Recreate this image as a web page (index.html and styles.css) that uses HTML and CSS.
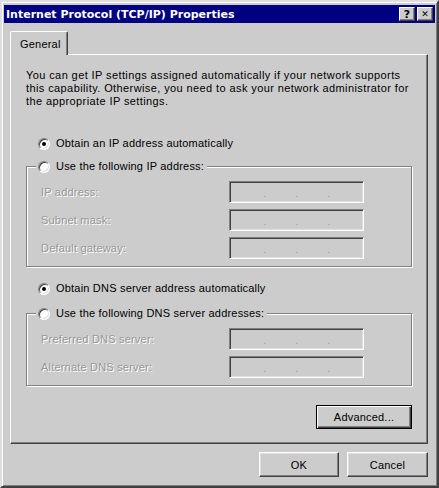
FILE: index.html
```html
<!DOCTYPE html>
<html lang="en">
<head>
    <meta charset="UTF-8">
    <meta name="viewport" content="width=device-width, initial-scale=1.0">
    <title>Internet Protocol (TCP/IP) Properties</title>
    <link rel="stylesheet" href="styles.css">
</head>
<body>
    <div class="window">
        <div class="titlebar">
            <span class="title">Internet Protocol (TCP/IP) Properties</span>
            <div class="caption-buttons">
                <span class="cap-btn">?</span>
                <span class="cap-btn cap-close">&#x2715;</span>
            </div>
        </div>

        <div class="dialog-body">
            <div class="tabs">
                <div class="tab active">General</div>
            </div>

            <div class="panel">
                <p class="intro">
                    You can get IP settings assigned automatically if your network supports<br>
                    this capability. Otherwise, you need to ask your network administrator for<br>
                    the appropriate IP settings.
                </p>

                <!-- IP address -->
                <div class="radio-row first">
                    <span class="radio checked"></span>Obtain an IP address automatically
                </div>

                <fieldset class="group">
                    <legend class="radio-row"><span class="radio"></span>Use the following IP address:</legend>
                    <div class="field-grid">
                        <span class="field-label">IP address:</span>
                        <div class="ip-box"><span>.</span><span>.</span><span>.</span></div>
                        <span class="field-label">Subnet mask:</span>
                        <div class="ip-box"><span>.</span><span>.</span><span>.</span></div>
                        <span class="field-label">Default gateway:</span>
                        <div class="ip-box"><span>.</span><span>.</span><span>.</span></div>
                    </div>
                </fieldset>

                <!-- DNS -->
                <div class="radio-row dns">
                    <span class="radio checked"></span>Obtain DNS server address automatically
                </div>

                <fieldset class="group">
                    <legend class="radio-row"><span class="radio"></span>Use the following DNS server addresses:</legend>
                    <div class="field-grid">
                        <span class="field-label">Preferred DNS server:</span>
                        <div class="ip-box"><span>.</span><span>.</span><span>.</span></div>
                        <span class="field-label">Alternate DNS server:</span>
                        <div class="ip-box"><span>.</span><span>.</span><span>.</span></div>
                    </div>
                </fieldset>

                <div class="panel-actions">
                    <button class="btn btn-advanced">Advanced...</button>
                </div>
            </div>

            <div class="dialog-actions">
                <button class="btn btn-ok">OK</button>
                <button class="btn btn-cancel">Cancel</button>
            </div>
        </div>
    </div>
</body>
</html>
```

FILE: styles.css
```css
:root {
    --face: #cccccc;
    --shadow: #808080;
    --dark: #404040;
    --light: #dfdfdf;
    --title-bg: #000080;
    --disabled: #979797;
}

* {
    box-sizing: border-box;
    margin: 0;
    padding: 0;
}

body {
    background: var(--face);
    font-family: 'Liberation Sans', Arial, sans-serif;
    font-size: 11px;
    letter-spacing: 0.2px;
    color: #000;
}

.window {
    width: 439px;
    height: 488px;
    background: var(--face);
    border: 2px solid;
    border-color: var(--light) var(--dark) var(--dark) var(--light);
    box-shadow: inset 1px 1px 0 #fff, inset -1px -1px 0 var(--shadow);
    padding: 3px 2px 2px;
}

/* title bar */
.titlebar {
    height: 18px;
    background: var(--title-bg);
    display: flex;
    align-items: center;
    justify-content: space-between;
    padding-left: 2px;
}

.title {
    color: #fff;
    font-family: 'DejaVu Sans', Verdana, sans-serif;
    font-weight: bold;
    font-size: 11px;
    letter-spacing: 0;
}

.caption-buttons {
    display: flex;
    gap: 2px;
    margin-right: 2px;
}

.cap-btn {
    width: 16px;
    height: 14px;
    background: var(--face);
    border: 1px solid;
    border-color: #fff var(--dark) var(--dark) #fff;
    box-shadow: inset -1px -1px 0 var(--shadow);
    display: flex;
    align-items: center;
    justify-content: center;
    font-family: 'DejaVu Sans', sans-serif;
    font-weight: bold;
    font-size: 11px;
    letter-spacing: 0;
    line-height: 1;
}

.cap-close {
    font-size: 9px;
}

/* tabs + panel */
.dialog-body {
    padding: 8px 7px 0 6px;
}

.tabs {
    display: flex;
    height: 23px;
}

.tab {
    width: 58px;
    height: 24px;
    padding: 6px 0 0 9px;
    border: 1px solid;
    border-bottom: none;
    border-color: #fff var(--dark) transparent #fff;
    box-shadow: inset -1px 0 0 var(--shadow);
    border-radius: 2px 2px 0 0;
    background: var(--face);
    position: relative;
    z-index: 1;
}

.panel {
    height: 390px;
    border: 1px solid;
    border-color: #fff var(--dark) var(--dark) #fff;
    box-shadow: inset -1px -1px 0 var(--shadow);
    padding: 14px 15px 0 15px;
}

.intro {
    line-height: 13px;
    white-space: nowrap;
    letter-spacing: 0.4px;
}

/* radios */
.radio-row {
    display: flex;
    align-items: center;
    gap: 6px;
    height: 13px;
    line-height: 13px;
    padding-left: 12px;
}

.radio-row.first {
    margin-top: 29px;
}

.radio-row.dns {
    margin-top: 15px;
}

.radio {
    width: 12px;
    height: 12px;
    border-radius: 50%;
    background: #fff;
    border: 1px solid;
    border-color: var(--shadow) #fff #fff var(--shadow);
    box-shadow: inset 1px 1px 0 var(--dark), inset -1px -1px 0 var(--light);
    position: relative;
    flex-shrink: 0;
}

.radio.checked::after {
    content: "";
    position: absolute;
    left: 3px;
    top: 3px;
    width: 4px;
    height: 4px;
    border-radius: 50%;
    background: #000;
}

/* group boxes */
.group {
    margin-top: 10px;
    border: 1px solid var(--shadow);
    box-shadow: inset 1px 1px 0 #fff, 1px 1px 0 #fff;
    padding: 8px 14px 7px;
    width: 386px;
}

.radio-row.dns + .group {
    margin-top: 12px;
}

.group legend.radio-row {
    margin-left: -5px;
    padding: 0 3px 0 2px;
    background: var(--face);
}

.field-grid {
    display: grid;
    grid-template-columns: 188px 135px;
    row-gap: 6px;
    align-items: center;
}

.field-label {
    color: var(--disabled);
    text-shadow: 1px 1px 0 #fff;
}

.ip-box {
    height: 22px;
    border: 1px solid;
    border-color: var(--shadow) #fff #fff var(--shadow);
    box-shadow: inset 1px 1px 0 var(--dark), inset -1px -1px 0 var(--light);
    display: flex;
    align-items: center;
    padding: 3px 0 0 33px;
    gap: 28px;
    color: var(--disabled);
    font-size: 10px;
    letter-spacing: 0;
}

.ip-box span {
    width: 4px;
    text-align: center;
}

/* buttons */
.btn {
    font-family: 'Liberation Sans', Arial, sans-serif;
    font-size: 11px;
    letter-spacing: 0.2px;
    color: #000;
    background: var(--face);
    border: 1px solid;
    border-color: #fff var(--dark) var(--dark) #fff;
    box-shadow: inset -1px -1px 0 var(--shadow), inset 1px 1px 0 var(--light);
    height: 25px;
}

.panel-actions {
    display: flex;
    justify-content: flex-end;
    margin-top: 19px;
}

.btn-advanced {
    width: 96px;
    height: 24px;
    border: 1px solid #000;
    box-shadow: inset 1px 1px 0 #fff, inset -1px -1px 0 var(--dark), inset -2px -2px 0 var(--shadow);
}

.dialog-actions {
    display: flex;
    justify-content: flex-end;
    gap: 8px;
    margin-top: 8px;
}

.btn-ok {
    width: 80px;
}

.btn-cancel {
    width: 81px;
}
```
